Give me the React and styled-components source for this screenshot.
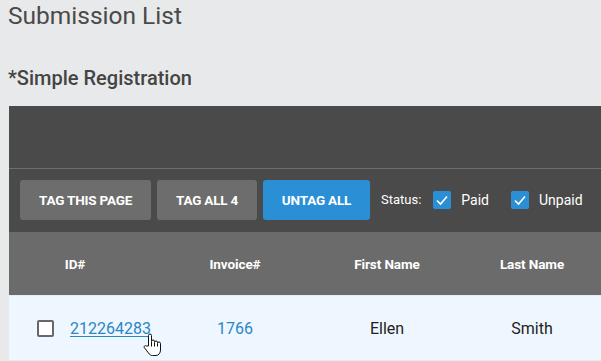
import React from "react";
import styled, { createGlobalStyle } from "styled-components";

const Global = createGlobalStyle`
  html, body { margin: 0; padding: 0; background: #e8e9ea; overflow: hidden; }
  body { font-family: Roboto, "Liberation Sans", sans-serif; }
`;

const Page = styled.div`
  width: 601px;
  height: 361px;
  overflow: hidden;
  padding-left: 8px;
  box-sizing: border-box;
`;

const Title = styled.h1`
  margin: 2px 0 0;
  font-size: 24.5px;
  line-height: 28px;
  font-weight: 400;
  color: #4a4a4a;
`;

const Subtitle = styled.h2`
  margin: 36px 0 0;
  font-size: 20px;
  line-height: 24px;
  font-weight: 500;
  color: #444;
`;

const Panel = styled.div`
  margin: 16px 0 0 1px;
  width: 640px;
  background: #4a4a4a;
`;

const TopBar = styled.div`
  height: 62px;
  border-bottom: 1px solid #6e6e6e;
`;

const Toolbar = styled.div`
  display: flex;
  align-items: center;
  height: 63px;
  padding: 0 0 2px 11px;
  box-sizing: border-box;
`;

const Button = styled.button`
  height: 40px;
  padding: 0;
  width: ${(p) => p.$w}px;
  margin-right: 6px;
  border: none;
  border-radius: 3px;
  background: ${(p) => (p.$primary ? "#2b8fd6" : "#6d6d6d")};
  color: #fff;
  font-family: Roboto, "Liberation Sans", sans-serif;
  font-weight: 700;
  font-size: 13.5px;
  letter-spacing: -0.2px;
`;

const StatusLabel = styled.span`
  margin-left: 5px;
  color: #fff;
  font-size: 13px;
  margin-right: 12px;
`;

const Check = styled.label`
  display: flex;
  align-items: center;
  gap: 10px;
  color: #fff;
  font-size: 14px;
  margin-right: 22px;
`;

const CheckBox = styled.span`
  width: 18px;
  height: 18px;
  border-radius: 2px;
  background: #2b8fd6;
  display: flex;
  align-items: center;
  justify-content: center;
`;

const Grid = styled.div`
  display: grid;
  grid-template-columns: 132px 188px 116px 174px 30px;
  align-items: center;
`;

const HeadRow = styled(Grid)`
  height: 63px;
  background: #6b6b6b;
  border-bottom: 1px solid #e6eef5;
`;

const HeadCell = styled.div`
  text-align: center;
  color: #fff;
  font-weight: 700;
  font-size: 13.5px;
  letter-spacing: -0.1px;
`;

const DataRow = styled(Grid)`
  height: 64px;
  background: #eef7ff;
  position: relative;
`;

const Cell = styled.div`
  text-align: ${(p) => p.$align || "center"};
  font-size: 16px;
  color: ${(p) => (p.$link ? "#2a86c6" : "#222")};
  padding-left: ${(p) => p.$pl || 0}px;
  display: ${(p) => (p.$flex ? "flex" : "block")};
  align-items: center;
  gap: 16px;
`;

const RowBox = styled.span`
  flex: 0 0 17px;
  width: 17px;
  height: 17px;
  border: 2px solid #686868;
  border-radius: 2px;
  box-sizing: border-box;
  background: #fff;
`;

const Link = styled.a`
  flex-shrink: 0;
  color: #2a86c6;
  text-decoration: underline;
  text-underline-offset: 2px;
`;

const Cursor = styled.svg`
  position: absolute;
  left: 133px;
  top: 37px;
`;

const Tick = () => (
  <svg width="14" height="14" viewBox="0 0 14 14">
    <path d="M2 7.5 L5.5 11 L12 3.5" fill="none" stroke="#fff" strokeWidth="1.6" />
  </svg>
);

export default function App() {
  return (
    <Page>
      <Global />
      <Title>Submission List</Title>
      <Subtitle>*Simple Registration</Subtitle>
      <Panel>
        <TopBar />
        <Toolbar>
          <Button $w={131}>TAG THIS PAGE</Button>
          <Button $w={100}>TAG ALL 4</Button>
          <Button $w={107} $primary>UNTAG ALL</Button>
          <StatusLabel>Status:</StatusLabel>
          <Check>
            <CheckBox><Tick /></CheckBox>Paid
          </Check>
          <Check>
            <CheckBox><Tick /></CheckBox>Unpaid
          </Check>
        </Toolbar>
        <HeadRow>
          <HeadCell>ID#</HeadCell>
          <HeadCell>Invoice#</HeadCell>
          <HeadCell>First Name</HeadCell>
          <HeadCell>Last Name</HeadCell>
          <HeadCell />
        </HeadRow>
        <DataRow>
          <Cell $align="left" $pl={28} $flex>
            <RowBox />
            <Link>212264283</Link>
          </Cell>
          <Cell $link>1766</Cell>
          <Cell>Ellen</Cell>
          <Cell>Smith</Cell>
          <Cell />
          <Cursor width="20" height="24" viewBox="0 0 20 24">
            <path
              d="M6.5 13 V2.5 a1.5 1.5 0 0 1 3 0 V8.5 a1.5 1.5 0 0 1 3 0 V9.5 a1.5 1.5 0 0 1 3 0 V10.5 a1.5 1.5 0 0 1 3 0 V17 c0 3 -2 5.5 -4.5 5.5 H10.5 c-2 0 -3 -1 -4 -2.5 L2.3 14.6 c-0.8 -1.2 0.8 -2.6 2 -1.6 Z"
              fill="#fff"
              stroke="#111"
              strokeWidth="1"
              strokeLinejoin="round"
            />
            <path d="M9.5 9 v4.5 M12.5 10 v3.5 M15.5 11 v2.5" stroke="#111" strokeWidth="1" />
          </Cursor>
        </DataRow>
      </Panel>
    </Page>
  );
}
